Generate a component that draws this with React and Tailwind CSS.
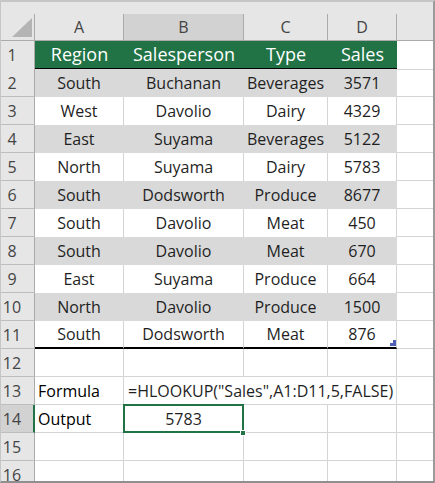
import React from "react";

const data = [
  ["South", "Buchanan", "Beverages", "3571"],
  ["West", "Davolio", "Dairy", "4329"],
  ["East", "Suyama", "Beverages", "5122"],
  ["North", "Suyama", "Dairy", "5783"],
  ["South", "Dodsworth", "Produce", "8677"],
  ["South", "Davolio", "Meat", "450"],
  ["South", "Davolio", "Meat", "670"],
  ["East", "Suyama", "Produce", "664"],
  ["North", "Davolio", "Produce", "1500"],
  ["South", "Dodsworth", "Meat", "876"],
];

const cols = "grid grid-cols-[34px_89px_120px_84px_69px_1fr]";

const RowHead = ({ n, selected }) => (
  <div
    className={
      "flex items-center border-b border-[#bdbdbd] text-[16px] text-[#444] " +
      (selected
        ? "bg-[#d2d2d2] border-r-2 border-r-[#217346]"
        : "bg-[#e6e6e6] border-r border-r-[#ababab]")
    }
  >
    <span className="w-[22px] text-center">{n}</span>
  </div>
);

const ColHead = ({ label, selected, last }) => (
  <div
    className={
      "flex items-center justify-center text-[#444] " +
      (last ? "" : "border-r border-[#ababab] ") +
      (selected ? "bg-[#d2d2d2]" : "bg-[#e6e6e6]")
    }
  >
    {label}
  </div>
);

const Blank = ({ last }) => (
  <div className={"border-b border-[#d4d4d4] " + (last ? "" : "border-r")} />
);

const App = () => {
  return (
    <div
      className="w-[435px] h-[483px] overflow-hidden bg-white border-t-2 border-l border-r-2 border-b-2 border-t-[#c6c6c6] border-l-[#c6c6c6] border-r-[#9b9b9b] border-b-[#8f8f8f] text-[16px] text-[#1f1f1f]"
      style={{ fontFamily: '"Segoe UI", "Open Sans", "Noto Sans", sans-serif' }}
    >
      {/* top strip */}
      <div className="h-[12px] bg-[#e6e6e6]" />

      {/* column headers */}
      <div className={cols + " h-[27px] border-b border-[#ababab] bg-[#e6e6e6]"}>
        <div className="relative border-r border-[#ababab]">
          <svg className="absolute left-[11px] top-[4px]" width="21" height="20" viewBox="0 0 21 20">
            <polygon points="0,19 20,0 20,19" fill="#b4b4b4" />
          </svg>
        </div>
        <ColHead label="A" />
        <ColHead label="B" selected />
        <ColHead label="C" />
        <ColHead label="D" />
        <ColHead label="" last />
      </div>

      {/* table header row */}
      <div className={cols + " h-[28px]"}>
        <RowHead n={1} />
        {["Region", "Salesperson", "Type", "Sales"].map((h) => (
          <div
            key={h}
            className="flex items-center justify-center bg-[#217346] text-white text-[18px] border-b-2 border-black"
          >
            {h}
          </div>
        ))}
        <Blank last />
      </div>

      {/* table body */}
      {data.map((r, i) => {
        const gray = i % 2 === 0;
        const last = i === data.length - 1;
        return (
          <div key={i} className={cols + " h-[28px]"}>
            <RowHead n={i + 2} />
            {r.map((v, j) => (
              <div
                key={j}
                className={
                  "relative flex items-center justify-center border-r " +
                  (gray ? "bg-[#d9d9d9] border-[#d9d9d9] " : "bg-white border-[#d4d4d4] ") +
                  (last ? "border-b-2 border-b-black" : "")
                }
              >
                {v}
                {last && j === 3 && (
                  <svg className="absolute right-[0px] bottom-[1px]" width="6" height="6" viewBox="0 0 6 6">
                    <polygon points="3,0 6,0 6,6 0,6 0,3 3,3" fill="#4f5fb3" />
                  </svg>
                )}
              </div>
            ))}
            <Blank last />
          </div>
        );
      })}

      {/* row 12 */}
      <div className={cols + " h-[28px]"}>
        <RowHead n={12} />
        <Blank />
        <Blank />
        <Blank />
        <Blank />
        <Blank last />
      </div>

      {/* row 13 */}
      <div className={cols + " h-[28px]"}>
        <RowHead n={13} />
        <div className="flex items-center pl-[3px] text-black border-r border-b border-[#d4d4d4]">Formula</div>
        <div className="col-span-3 flex items-center pl-[4px] whitespace-nowrap border-r border-b border-[#d4d4d4]">
          =HLOOKUP("Sales",A1:D11,5,FALSE)
        </div>
        <Blank last />
      </div>

      {/* row 14 */}
      <div className={cols + " h-[28px]"}>
        <RowHead n={14} selected />
        <div className="flex items-center pl-[3px] text-black border-r border-b border-[#d4d4d4]">Output</div>
        <div className="relative flex items-center justify-center border-r border-b border-[#d4d4d4]">
          5783
          <div className="absolute -top-[1px] -left-[1px] -right-[1px] -bottom-[1px] border-2 border-[#217346]" />
          <div className="absolute -right-[3px] -bottom-[4px] w-[6px] h-[6px] bg-[#217346] border border-white" />
        </div>
        <Blank />
        <Blank />
        <Blank last />
      </div>

      {[15, 16].map((n) => (
        <div key={n} className={cols + " h-[28px]"}>
          <RowHead n={n} />
          <Blank />
          <Blank />
          <Blank />
          <Blank />
          <Blank last />
        </div>
      ))}
    </div>
  );
};

export default App;
